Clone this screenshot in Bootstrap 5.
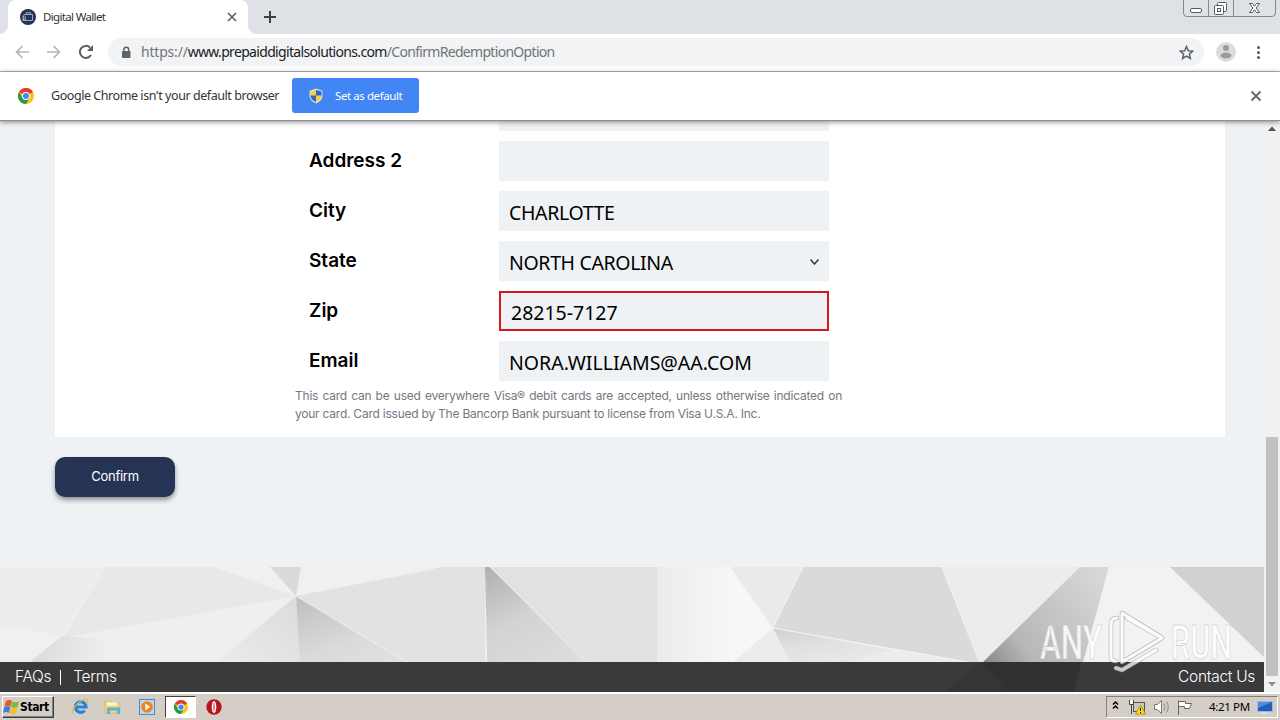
<!DOCTYPE html>
<html lang="en">
    <head>
        <meta charset="UTF-8" />
        <title>Digital Wallet</title>
        <!-- Bootstrap CSS -->
        <link href="https://cdn.jsdelivr.net/npm/bootstrap@5.3.0/dist/css/bootstrap.min.css" rel="stylesheet" />
        <style>
            body {
                width: 1280px;
                height: 720px;
                overflow: hidden;
                font-family: "Noto Sans", "Open Sans", sans-serif;
                color: #333;
            }
            svg {
                display: block;
                flex-shrink: 0;
            }
            .tab-strip {
                height: 34px;
                background: #dee1e6;
                padding-left: 8px;
            }
            .browser-tab {
                position: relative;
                width: 240px;
                height: 34px;
                background: #fff;
                border-radius: 8px 8px 0 0;
                padding: 0 11px 0 12px;
            }
            .browser-tab::before,
            .browser-tab::after {
                content: "";
                position: absolute;
                bottom: 0;
                width: 8px;
                height: 8px;
            }
            .browser-tab::before {
                left: -8px;
                background: radial-gradient(circle at 0 0, #dee1e6 7.5px, #fff 8px);
            }
            .browser-tab::after {
                right: -8px;
                background: radial-gradient(circle at 100% 0, #dee1e6 7.5px, #fff 8px);
            }
            .tab-title {
                font-size: 11.5px;
                letter-spacing: -0.66px;
                margin-left: 7px;
            }
            .new-tab {
                margin: 11px 0 0 16px;
            }
            .toolbar {
                height: 38px;
                border-bottom: 1px solid #b4b4b4;
                padding: 0 0 1px 15px;
            }
            .address {
                width: 1096px;
                height: 28px;
                border-radius: 14px;
                background: #f1f3f4;
                margin-left: 15px;
                padding: 0 10px 0 13px;
            }
            .address-text {
                font-size: 14px;
                color: #70757a;
                margin: -2px 0 0 10px;
                letter-spacing: -0.69px;
                white-space: nowrap;
            }
            .address-text .scheme {
                letter-spacing: -0.2px;
            }
            .address-text .host {
                letter-spacing: -0.67px;
                color: #202124;
            }
            .toolbar-end {
                margin-left: 10px;
            }
            .infobar {
                position: relative;
                z-index: 2;
                height: 49px;
                padding: 0 18px;
                border-bottom: 1px solid #8f8f8f;
                box-shadow: 0 1px 5px rgba(0, 0, 0, 0.45);
            }
            .infobar-text {
                font-size: 12.5px;
                margin-left: 17px;
                width: 229px;
                letter-spacing: -0.44px;
                white-space: nowrap;
            }
            .btn-default-browser {
                width: 127px;
                height: 35px;
                margin: -1px 0 0 12px;
                border-radius: 3px;
                background: #4285f4;
                color: #fff;
                font-size: 11.5px;
                letter-spacing: -0.42px;
                padding: 0 0 0 17px;
            }
            .btn-default-browser span {
                margin-left: 12px;
            }
            .viewport {
                height: 571px;
                overflow: hidden;
            }
            .page {
                width: 1264px;
                background: #eef2f5;
            }
            .panel {
                width: 1170px;
                height: 316px;
                margin-left: 55px;
                background: #fff;
                padding-left: 240px;
            }
            .field-row {
                height: 40px;
                margin-bottom: 10px;
            }
            .field-row.clipped {
                height: 10px;
            }
            .field-label {
                width: 204px;
                padding: 6px 0 0 14px;
                font-family: Inter, sans-serif;
                font-weight: 600;
                font-size: 19px;
                color: #000;
            }
            .field-box {
                width: 330px;
                padding: 2px 10px 0 10px;
                background: #eff2f4;
                font-size: 19.5px;
                line-height: 40px;
                color: #000;
            }
            .field-box.tight {
                letter-spacing: -0.35px;
            }
            .field-box.invalid {
                border: 2px solid #d3191e;
                line-height: 36px;
            }
            .fine-print {
                width: 547px;
                margin-top: -4px;
                font-family: Inter, sans-serif;
                font-size: 12px;
                letter-spacing: -0.23px;
                line-height: 18px;
                white-space: nowrap;
                color: #75787d;
            }
            .justified {
                text-align-last: justify;
            }
            .btn-confirm {
                width: 120px;
                height: 40px;
                margin: 20px 0 0 55px;
                border-radius: 10px;
                background: #253355;
                color: #fff;
                font-family: Inter, sans-serif;
                font-size: 13px;
                letter-spacing: -0.25px;
                box-shadow: 0 3px 5px rgba(0, 0, 0, 0.4);
            }
            .page-footer {
                position: relative;
                height: 125px;
            }
            .footer-art {
                position: absolute;
                inset: 0;
            }
            .footer-links {
                position: relative;
                height: 30px;
                padding: 0 9px 0 15px;
                color: #fff;
                font-family: Inter, sans-serif;
                font-weight: 300;
                font-size: 15.5px;
                line-height: 18px;
                letter-spacing: -0.3px;
            }
            .link-divider {
                height: 15px;
                margin: 0 12px 0 9px;
            }
            .watermark {
                position: absolute;
                left: 1034px;
                top: 40px;
                overflow: visible;
            }
            .scroll-track {
                width: 16px;
                background: #f1f1f1;
            }
            .scroll-thumb {
                width: 12px;
                height: 239px;
                background: #c1c1c1;
            }
            .taskbar {
                height: 28px;
                background: #d5cec6;
                border-top: 2px solid #fff;
                padding: 2px;
                position: relative;
                z-index: 3;
            }
            .start-btn {
                width: 52px;
                height: 22px;
                border: 1px solid;
                border-color: #fff #404040 #404040 #fff;
                box-shadow: inset -1px -1px 0 #808080;
                font: bold 12px "DejaVu Sans Condensed", "DejaVu Sans", sans-serif;
                letter-spacing: -0.4px;
                color: #000;
            }
            .quick-launch {
                margin-top: 2px;
            }
            .task-active {
                width: 31px;
                height: 22px;
                margin-left: 10px;
                background: #fff;
                border: 1px solid;
                border-color: #404040 #fff #fff #404040;
            }
            .opera {
                margin: 3px 0 0 10px;
            }
            .tray {
                width: 172px;
                height: 22px;
                border: 1px solid;
                border-color: #808080 #fff #fff #808080;
                font-size: 11.5px;
                letter-spacing: -0.35px;
                color: #000;
            }
            .clock {
                margin-left: 14px;
            }
        </style>
    </head>
    <body class="bg-white d-flex flex-column">
        <!-- Tabs -->
        <div class="tab-strip d-flex">
            <div class="browser-tab d-flex align-items-center">
                <svg width="16" height="16" viewBox="0 0 16 16">
                    <circle cx="8" cy="8" r="8" fill="#253355" />
                    <path d="M4 5.500h8.500v6H3zM6.500 5V3.700h4V5M2 8h3.500v2.500H2" fill="none" stroke="#9ba9c4" />
                </svg>
                <span class="tab-title">Digital Wallet</span>
                <svg class="ms-auto" width="10" height="10" viewBox="0 0 10 10">
                    <path d="M1 1l8 8M9 1l-8 8" stroke="#5f6368" stroke-width="1.7" />
                </svg>
            </div>
            <svg class="new-tab" width="12" height="12" viewBox="0 0 12 12">
                <path d="M6 0v12M0 6h12" stroke="#3c4043" stroke-width="2" />
            </svg>
            <svg class="ms-auto" width="97" height="18" viewBox="0 0 97 18">
                <path d="M.5 0v13q0 3.500 3.500 3.500h85q3.500 0 3.500-3.500V0M25.500 0v16M50.500 0v16" fill="none" stroke="#858a91" />
                <rect x="7.500" y="8.500" width="11" height="4" rx="1.500" fill="#fff" stroke="#555b66" />
                <rect x="34.500" y="2.500" width="9" height="9" rx="1" fill="#fff" stroke="#555b66" />
                <rect x="31.500" y="5.500" width="9" height="9" rx="1" fill="#fff" stroke="#555b66" />
                <rect x="34.500" y="8.500" width="3" height="3" fill="#fff" stroke="#555b66" />
                <path d="M66.500 3.500h3l2 2.700 2-2.700h3l-3.300 4.500 3.300 4.500h-3l-2-2.700-2 2.700h-3l3.300-4.500z" fill="#fff" stroke="#555b66" />
            </svg>
        </div>

        <!-- Toolbar -->
        <div class="toolbar d-flex align-items-center">
            <svg width="78" height="16" viewBox="0 0 78 16">
                <path d="M14 8H1.500M7.500 2L1.500 8l6 6M32 8h12.500M38.500 2l6 6-6 6" fill="none" stroke="#b3b5b8" stroke-width="1.700" />
                <path d="M76 11a6 6 0 1 1-1-7.500" fill="none" stroke="#5a5d61" stroke-width="2" />
                <path d="M78 1v6h-6z" fill="#5a5d61" />
            </svg>
            <div class="address d-flex align-items-center">
                <svg width="10" height="13" viewBox="0 0 10 13">
                    <rect x="1" y="5" width="8.500" height="7" rx="1" fill="#5f6368" />
                    <path d="M2.800 5.500V3.700a2.400 2.400 0 0 1 4.900 0v1.800" fill="none" stroke="#5f6368" stroke-width="1.400" />
                </svg>
                <span class="address-text"><span class="scheme">https://</span><span class="host">www.prepaiddigitalsolutions.com</span>/ConfirmRedemptionOption</span>
                <svg class="ms-auto" width="15" height="15" viewBox="0 0 15 15">
                    <path d="M7.500 1.500l1.800 4.200 4.500.4-3.400 3 1 4.400-3.900-2.400-3.900 2.400 1-4.400-3.400-3 4.500-.4z" fill="none" stroke="#5f6368" stroke-width="1.500" />
                </svg>
            </div>
            <svg class="toolbar-end" width="50" height="20" viewBox="0 0 50 20">
                <circle cx="12" cy="10" r="10" fill="#dcdcdc" />
                <circle cx="12" cy="6" r="3" fill="#9b9b9b" />
                <ellipse cx="12" cy="13.500" rx="5.500" ry="3" fill="#9b9b9b" />
                <circle cx="44.500" cy="5.500" r="1.500" fill="#55585c" />
                <circle cx="44.500" cy="10.500" r="1.500" fill="#55585c" />
                <circle cx="44.500" cy="15.500" r="1.500" fill="#55585c" />
            </svg>
        </div>

        <!-- Default browser bar -->
        <div class="infobar bg-white d-flex align-items-center">
            <svg width="16" height="16" viewBox="0 0 16 16">
                <g id="chromeLogo">
                    <circle cx="8" cy="8" r="8" fill="#fbc116" />
                    <path d="M8 8L1.070 4A8 8 0 0 1 14.930 4z" fill="#e33b2e" />
                    <path d="M1.070 4A8 8 0 0 0 8 16l3.500-6L8 8 4.500 10z" fill="#249a4f" />
                    <circle cx="8" cy="8" r="4" fill="#fff" />
                    <circle cx="8" cy="8" r="3" fill="#4285f4" />
                </g>
            </svg>
            <span class="infobar-text">Google Chrome isn't your default browser</span>
            <button class="btn btn-default-browser border-0 d-flex align-items-center">
                <svg width="14" height="16" viewBox="0 0 14 16">
                    <path d="M7 .5l6.500 2.200V8q0 4.500-6.500 7.500Q.5 12.500.5 8V2.700z" fill="#d9dee6" />
                    <path d="M7 2v5.500H1.500V3.600zM7 7.500h5.500q0 4-5.500 6.500z" fill="#f7cf3c" />
                    <path d="M7 2v5.500h5.500V3.600zM7 7.500H1.500q0 4 5.500 6.500z" fill="#2e68b8" />
                </svg>
                <span>Set as default</span>
            </button>
            <svg class="ms-auto" width="12" height="12" viewBox="0 0 12 12">
                <path d="M1.500 1.500l9 9M10.500 1.500l-9 9" stroke="#65686c" stroke-width="1.900" />
            </svg>
        </div>

        <!-- Web page -->
        <div class="viewport d-flex">
            <div class="page d-flex flex-column align-items-start">
                <div class="panel">
                    <div class="field-row clipped d-flex">
                        <div class="field-label"></div>
                        <div class="field-box"></div>
                    </div>
                    <div class="field-row d-flex">
                        <div class="field-label">Address 2</div>
                        <div class="field-box"></div>
                    </div>
                    <div class="field-row d-flex">
                        <div class="field-label">City</div>
                        <div class="field-box tight">CHARLOTTE</div>
                    </div>
                    <div class="field-row d-flex">
                        <div class="field-label">State</div>
                        <div class="field-box tight d-flex justify-content-between align-items-start">
                            NORTH CAROLINA
                            <svg class="mt-3" width="9" height="6" viewBox="0 0 9 6">
                                <path d="M.5 .5l4 4.500 4-4.500" fill="none" stroke="#333" stroke-width="1.500" />
                            </svg>
                        </div>
                    </div>
                    <div class="field-row d-flex">
                        <div class="field-label">Zip</div>
                        <div class="field-box invalid">28215-7127</div>
                    </div>
                    <div class="field-row d-flex">
                        <div class="field-label">Email</div>
                        <div class="field-box">NORA.WILLIAMS@AA.COM</div>
                    </div>
                    <div class="fine-print">
                        <div class="justified">This card can be used everywhere Visa® debit cards are accepted, unless otherwise indicated on</div>
                        <div>your card. Card issued by The Bancorp Bank pursuant to license from Visa U.S.A. Inc.</div>
                    </div>
                </div>
                <button class="btn btn-confirm border-0">Confirm</button>

                <div class="page-footer w-100 mt-auto d-flex flex-column justify-content-end">
                    <svg class="footer-art" width="1264" height="125" viewBox="0 0 1264 125">
                        <defs>
                            <linearGradient id="fold" x1="0" y1="0" x2="0.5" y2="1">
                                <stop offset="0" stop-color="#b0b0b0" />
                                <stop offset="0.45" stop-color="#d3d3d3" />
                                <stop offset="1" stop-color="#e0e0e0" />
                            </linearGradient>
                            <linearGradient id="foldSoft" x1="0" y1="0" x2="0.6" y2="1">
                                <stop offset="0" stop-color="#bebebe" />
                                <stop offset="0.5" stop-color="#dadada" />
                                <stop offset="1" stop-color="#e6e6e6" />
                            </linearGradient>
                            <linearGradient id="glow" x1="0" y1="0" x2="1" y2="0">
                                <stop offset="0" stop-color="#ebebeb" />
                                <stop offset="0.5" stop-color="#f7f7f7" />
                                <stop offset="1" stop-color="#f6f6f6" />
                            </linearGradient>
                            <linearGradient id="peak" gradientUnits="userSpaceOnUse" x1="981" y1="97" x2="1100" y2="10">
                                <stop offset="0" stop-color="#858585" />
                                <stop offset="0.3" stop-color="#b7b7b7" />
                                <stop offset="1" stop-color="#d7d7d7" />
                            </linearGradient>
                            <linearGradient id="edgeLeft" x1="1" y1="0" x2="0" y2="1">
                                <stop offset="0" stop-color="#dadada" />
                                <stop offset="1" stop-color="#f0f0f0" />
                            </linearGradient>
                            <linearGradient id="corner" gradientUnits="userSpaceOnUse" x1="50" y1="69" x2="105" y2="95">
                                <stop offset="0" stop-color="#dedede" />
                                <stop offset="1" stop-color="#efefef" />
                            </linearGradient>
                        </defs>
                        <rect width="1264" height="125" fill="#f0f0f0" />
                        <path d="M0 0h106L62 69 0 58z" fill="#ededed" />
                        <path d="M106 0h107l83 29L62 73z" fill="#e8e8e8" />
                        <path d="M62 71l234-42-80 66H30z" fill="#efefef" />
                        <path d="M62 69l-32 26h110l-30-22z" fill="url(#corner)" />
                        <path d="M270 0h31l-5 29z" fill="#dadada" />
                        <path d="M296 29L430 3 440 0h45v125H400z" fill="#e2e2e2" />
                        <path d="M296 29l-90 75v21h100z" fill="url(#edgeLeft)" />
                        <path d="M296 29l6 96h150z" fill="url(#foldSoft)" />
                        <path d="M485 0h173v125h-80z" fill="#e1e1e1" />
                        <path d="M485 0l3 125h125L490 0z" fill="url(#fold)" />
                        <path d="M490 0l100 98M296 29l115 68" stroke="#ededed" fill="none" />
                        <path d="M657 0h150v125H657z" fill="url(#glow)" />
                        <path d="M730 0h73l-30 61z" fill="#eaeaea" />
                        <path d="M803 0h139l39 97-131-23-77-13z" fill="#dadada" />
                        <path d="M773 61L733 95v30h60l200-25z" fill="#ececec" />
                        <path d="M773 61l17 34h60l40-12z" fill="url(#foldSoft)" opacity=".65" />
                        <path d="M942 0h138l-99 97z" fill="#ececec" />
                        <path d="M942 0l38 97M803 0l-30 61 206 36" fill="none" stroke="#f3f3f3" />
                        <path d="M1080 0h29l-34 125h-65l-29-28z" fill="url(#peak)" />
                        <path d="M1109 0h61l94 92v33h-189z" fill="#f2f2f2" />
                        <path d="M1170 0h94v90z" fill="#d1d1d1" />
                        <rect y="95" width="1264" height="30" fill="#3a3a3a" />
                        <path d="M981 95l-36 30h63z" fill="#353535" />
                        <path d="M981 95h100l-7 30h-66z" fill="#313131" />
                    </svg>
                    <svg class="watermark" width="206" height="72" viewBox="0 0 206 72">
                        <g fill="#fff" stroke="#b5b5b5" stroke-width=".5" opacity=".85" font-family="Roboto, sans-serif" font-weight="500" font-size="49">
                            <text x="6" y="52" textLength="62" lengthAdjust="spacingAndGlyphs">ANY</text>
                            <text x="137" y="52" textLength="61" lengthAdjust="spacingAndGlyphs">RUN</text>
                        </g>
                        <g fill="none" stroke-linejoin="round" stroke-linecap="round" opacity=".75">
                            <path d="M83 11q-6 0-6 6v33q0 4 5 4M88 39V6l39 24M88 21v34l40-24-35-20M82 61l6 2 34-20" stroke="#a5a5a5" stroke-width="4.500" />
                            <path d="M83 11q-6 0-6 6v33q0 4 5 4M88 39V6l39 24M88 21v34l40-24-35-20M82 61l6 2 34-20" stroke="#fff" stroke-width="3.200" />
                        </g>
                    </svg>
                    <div class="footer-links d-flex align-items-center">
                        <span>FAQs</span>
                        <span class="link-divider border-start border-white"></span>
                        <span>Terms</span>
                        <span class="ms-auto">Contact Us</span>
                    </div>
                </div>
            </div>
            <div class="scroll-track d-flex flex-column align-items-center">
                <svg width="8" height="10" viewBox="0 0 8 10"><path d="M0 10l4-4.500L8 10z" fill="#505050" /></svg>
                <div class="scroll-thumb mt-auto"></div>
                <svg width="8" height="16" viewBox="0 0 8 16"><path d="M0 6l4 4.500L8 6z" fill="#909090" /></svg>
            </div>
        </div>

        <!-- Taskbar -->
        <div class="taskbar d-flex">
            <div class="start-btn d-flex align-items-center">
                <svg width="17" height="16" viewBox="0 0 17 16">
                    <path d="M3 2q3-2 6 0L7.500 7.500q-3-1.500-6 0z" fill="#e8562a" />
                    <path d="M9.500 2.500q3 1.500 6.500 0L14.500 8q-3 1.500-6.500 0z" fill="#7cb93e" />
                    <path d="M1.300 8q3-1.500 6 0L6 14q-3-2-6 0z" fill="#3b80d0" />
                    <path d="M7.800 8.500q3 1.500 6.500 0L13 14.500q-3 1.500-6.500 0z" fill="#f5bd2c" />
                </svg>
                Start
            </div>
            <svg class="quick-launch" width="101" height="18" viewBox="0 0 101 18">
                <!-- Internet Explorer -->
                <path d="M20.500 9h11.500a5.300 5.300 0 1 0-1.300 3.500" fill="none" stroke="#2484d8" stroke-width="3.200" />
                <path d="M18.500 15.500Q17.500 11 24.500 5t9-3Q34.500 3.500 32.500 6" fill="none" stroke="#e2bd3c" stroke-width="1.200" />
                <!-- Explorer -->
                <path d="M51 3h6l1 2h8v10H51z" fill="#f0d777" stroke="#d2ae48" stroke-width=".6" />
                <path d="M53 4.500h10v3H53z" fill="#fff8cf" />
                <path d="M53 16V9.500h13V16h-3v-3.500h-7V16z" fill="#5fb0e0" />
                <!-- Media player -->
                <rect x="85.500" y="1.500" width="15" height="15" fill="#b9d7f0" stroke="#4f8ac4" />
                <circle cx="93" cy="9" r="5.800" fill="#f0831c" />
                <path d="M91.300 5.500l5 3.500-5 3.500z" fill="#fff" />
            </svg>
            <div class="task-active d-flex align-items-center justify-content-center">
                <svg width="14" height="14" viewBox="0 0 16 16"><use href="#chromeLogo" /></svg>
            </div>
            <svg class="opera" width="16" height="16" viewBox="0 0 16 16">
                <circle cx="8" cy="8" r="7.700" fill="#b5161b" />
                <ellipse cx="8" cy="8" rx="2.300" ry="6" fill="#fff" />
                <ellipse cx="8" cy="8" rx=".7" ry="4.500" fill="#c9595c" />
            </svg>
            <div class="tray ms-auto d-flex align-items-center">
                <svg width="88" height="18" viewBox="0 0 88 18">
                    <path d="M6 6.500l2.500-2.500L11 6.500M6 10.500L8.500 8l2.500 2.500" fill="none" stroke="#000" stroke-width="1.500" />
                    <!-- Network -->
                    <rect x="26.500" y="4.500" width="11" height="9" fill="#c8c8c8" stroke="#555" />
                    <path d="M22.500 2v4.500h4V2M24.500 6.500V16" fill="#fff" stroke="#444" />
                    <path d="M33.500 7L38.500 16h-10z" fill="#ffdc20" stroke="#b79500" />
                    <path d="M33.500 10v3M33.500 14v1" stroke="#000" />
                    <!-- Volume -->
                    <path d="M47.500 6.500h3l4-4v13l-4-4h-3z" fill="#fff" stroke="#777" />
                    <path d="M57 5.500q2 3.500 0 7M59.500 3.500q3.500 5.500 0 11" fill="none" stroke="#888" />
                    <!-- Action center -->
                    <path d="M71.500 17V2.500M71.500 3.500h7v2h6l-2 5h-5v-2h-6" fill="#fff" stroke="#666" />
                </svg>
                <span class="clock">4:21 PM</span>
                <svg class="ms-auto me-1" width="16" height="14" viewBox="0 0 16 14">
                    <rect x=".5" y="1.500" width="15" height="10" fill="#1f5fb8" stroke="#9bb8dd" />
                    <path d="M1 2h14L1 8z" fill="#4a90dd" />
                    <path d="M4 13h6" stroke="#dbe6f2" stroke-width="1.500" />
                </svg>
            </div>
        </div>

        <!-- Bootstrap JS -->
        <script src="https://cdn.jsdelivr.net/npm/bootstrap@5.3.0/dist/js/bootstrap.bundle.min.js"></script>
    </body>
</html>
